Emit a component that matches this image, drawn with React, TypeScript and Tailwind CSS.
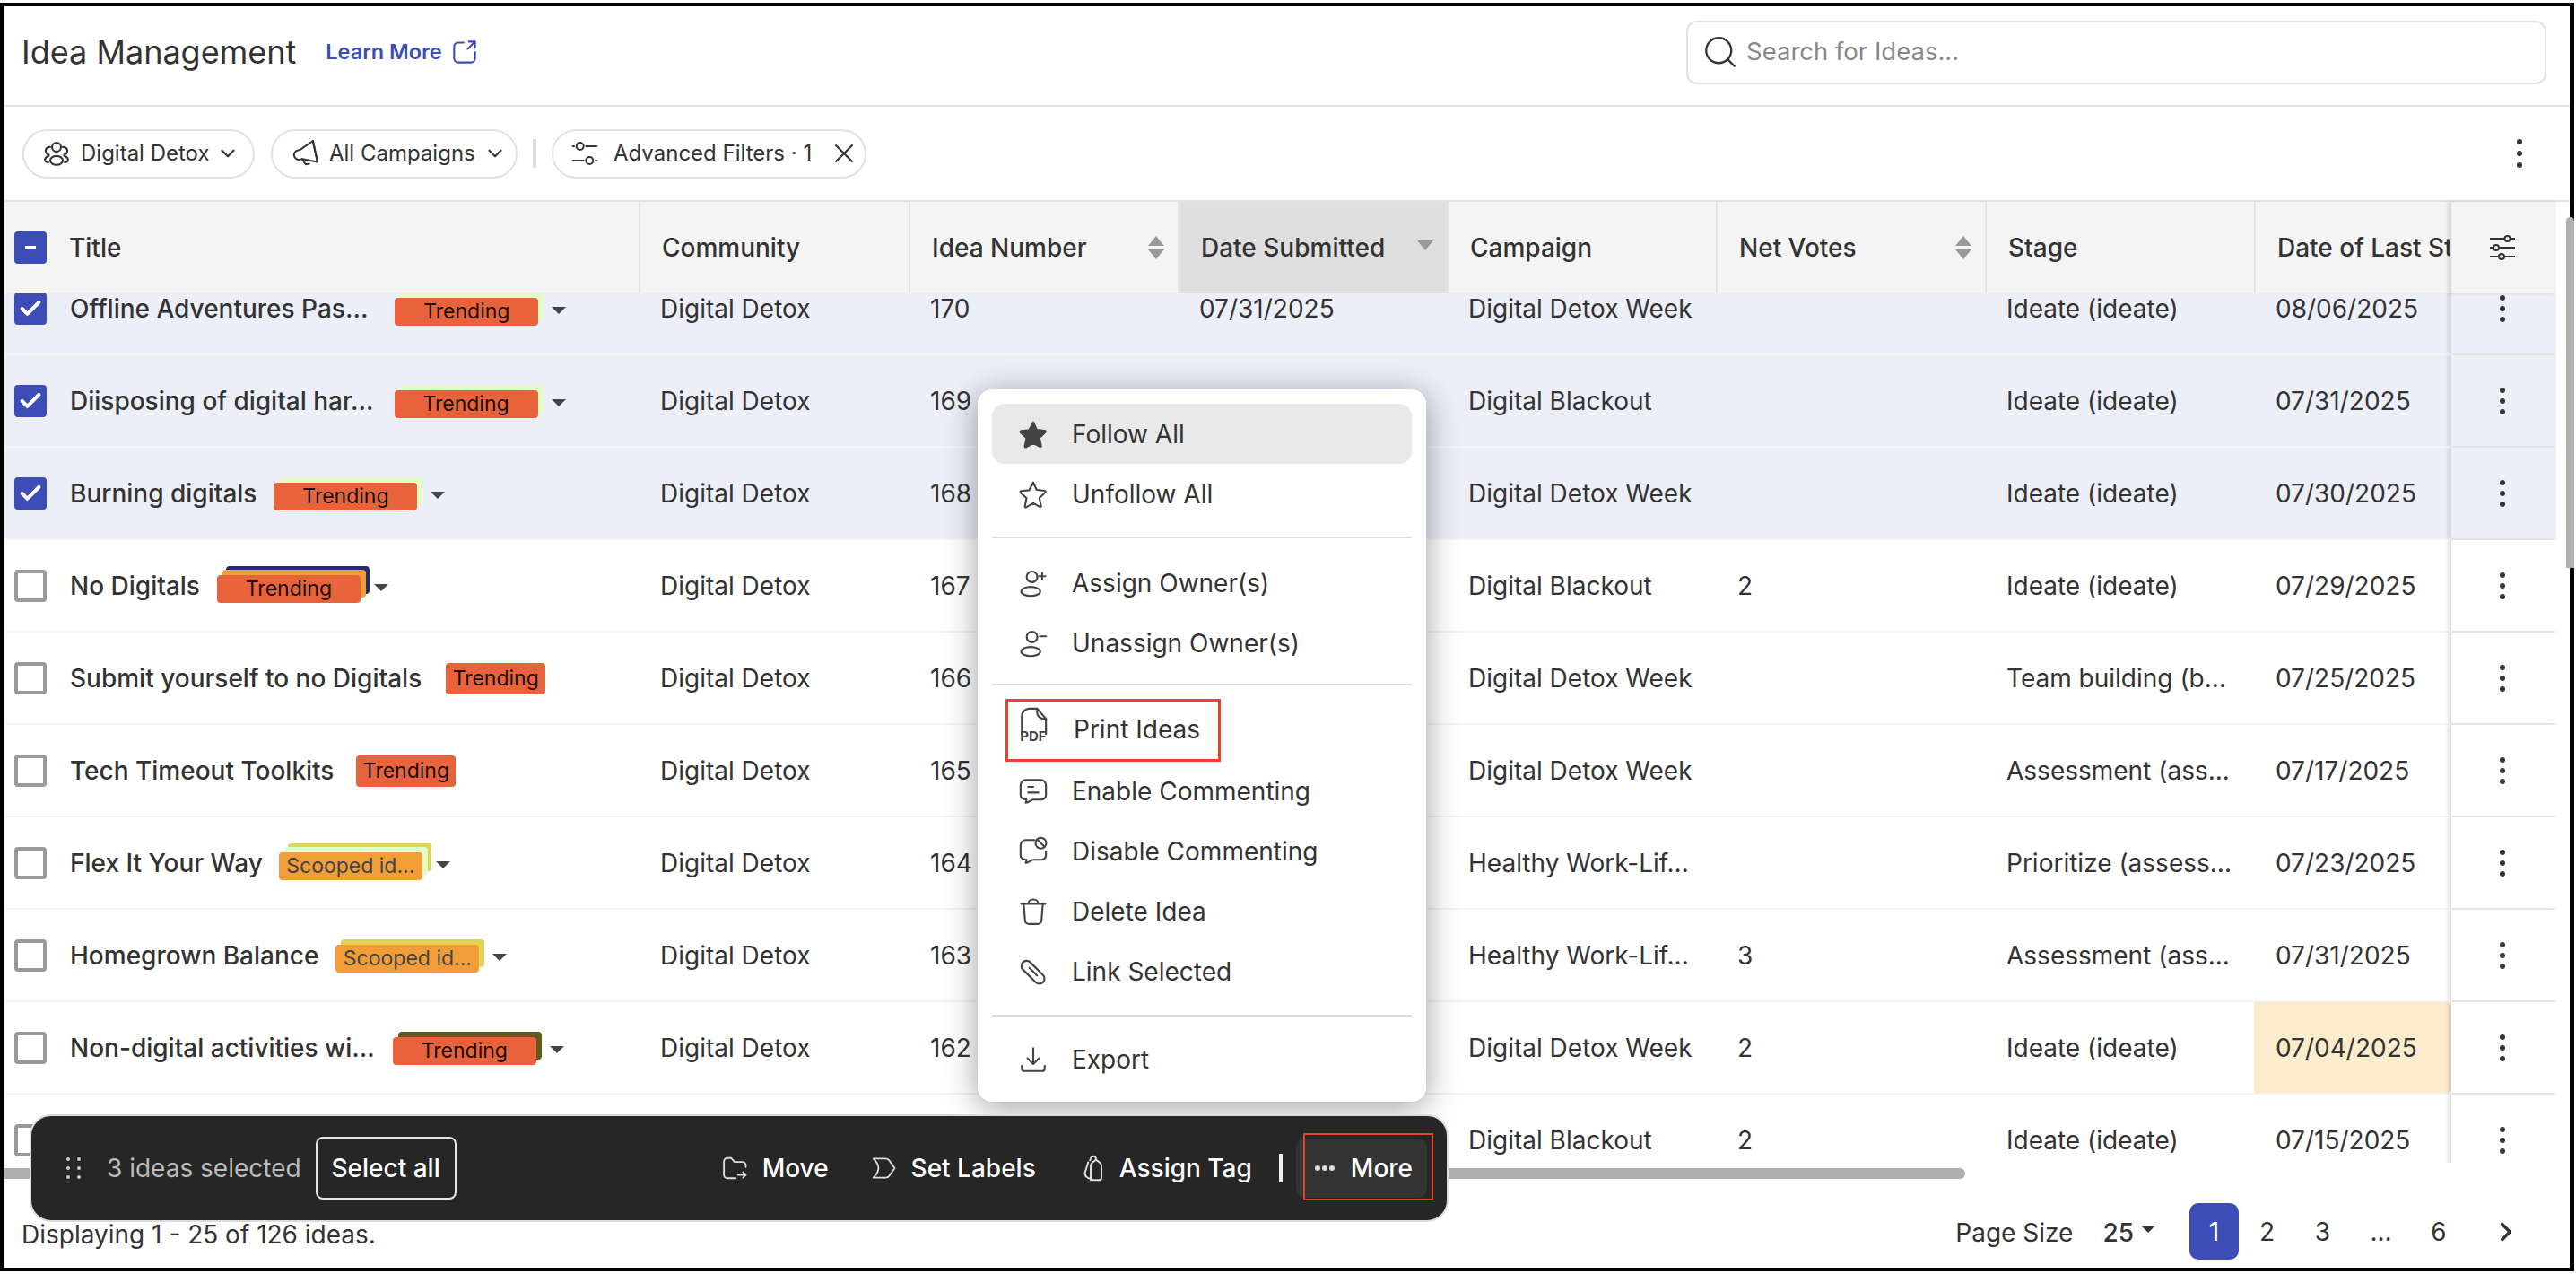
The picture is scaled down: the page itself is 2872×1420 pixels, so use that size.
import React from "react";
import { Check, ChevronDown, ChevronRight, Search, X } from "lucide-react";

type Row = {
  title?: string;
  tag?: string;
  back?: string[];
  gap?: string;
  num: string;
  date?: string;
  campaign: string;
  votes?: string;
  stage: string;
  last: string;
  selected?: boolean;
  overdue?: boolean;
};

const rows: Row[] = [
  { title: "Offline Adventures Pas...", tag: "Trending", back: ["#e2fdc7"], gap: "ml-[30px]", num: "170", date: "07/31/2025", campaign: "Digital Detox Week", stage: "Ideate (ideate)", last: "08/06/2025", selected: true },
  { title: "Diisposing of digital har...", tag: "Trending", back: ["#e2fdc7"], gap: "ml-[23px]", num: "169", campaign: "Digital Blackout", stage: "Ideate (ideate)", last: "07/31/2025", selected: true },
  { title: "Burning digitals", tag: "Trending", back: ["#e2fdc7"], gap: "ml-[19px]", num: "168", campaign: "Digital Detox Week", stage: "Ideate (ideate)", last: "07/30/2025", selected: true },
  { title: "No Digitals", tag: "Trending", back: ["#f19e38", "#232c73"], gap: "ml-[19px]", num: "167", campaign: "Digital Blackout", votes: "2", stage: "Ideate (ideate)", last: "07/29/2025" },
  { title: "Submit yourself to no Digitals", tag: "Trending", gap: "ml-[27px]", num: "166", campaign: "Digital Detox Week", stage: "Team building (b...", last: "07/25/2025" },
  { title: "Tech Timeout Toolkits", tag: "Trending", gap: "ml-[25px]", num: "165", campaign: "Digital Detox Week", stage: "Assessment (ass...", last: "07/17/2025" },
  { title: "Flex It Your Way", tag: "Scooped id...", back: ["#e2fdc7", "#dfd457"], gap: "ml-[18px]", num: "164", campaign: "Healthy Work-Lif...", stage: "Prioritize (assess...", last: "07/23/2025" },
  { title: "Homegrown Balance", tag: "Scooped id...", back: ["#dfd457"], gap: "ml-[19px]", num: "163", campaign: "Healthy Work-Lif...", votes: "3", stage: "Assessment (ass...", last: "07/31/2025" },
  { title: "Non-digital activities wi...", tag: "Trending", back: ["#625a1e"], gap: "ml-[20px]", num: "162", campaign: "Digital Detox Week", votes: "2", stage: "Ideate (ideate)", last: "07/04/2025", overdue: true },
  { num: "161", campaign: "Digital Blackout", votes: "2", stage: "Ideate (ideate)", last: "07/15/2025" },
];

function Kebab({ big }: { big?: boolean }) {
  return (
    <div className={big ? "flex flex-col gap-[7px]" : "flex flex-col gap-[6px]"}>
      <span className="w-[6px] h-[6px] rounded-full bg-[#333]" />
      <span className="w-[6px] h-[6px] rounded-full bg-[#333]" />
      <span className="w-[6px] h-[6px] rounded-full bg-[#333]" />
    </div>
  );
}

function SortArrows({ only }: { only?: boolean }) {
  return (
    <svg width="22" height="26" viewBox="0 0 22 26" fill="#999">
      {!only && <path d="M11 0l9 11H2z" />}
      <path d="M11 26l9-11H2z" transform={only ? "translate(0 -10)" : undefined} />
    </svg>
  );
}

function HeadCell({ label, w, sort, active }: { label: string; w: string; sort?: "both" | "down"; active?: boolean }) {
  return (
    <div className={`${w} h-full flex items-center shrink-0 pl-[24px] pr-[13px] border-l-2 border-[#e4e4e4] overflow-hidden ${active ? "bg-[#dfdfdf] border-[#dfdfdf]" : ""}`}>
      <span className="flex-1 whitespace-nowrap text-[28px] font-medium text-[#333]">{label}</span>
      {sort && <SortArrows only={sort === "down"} />}
    </div>
  );
}

function Cell({ w, children, bg }: { w: string; children?: React.ReactNode; bg?: string }) {
  return <div className={`${w} ${bg ?? ""} h-full shrink-0 pl-[24px] flex items-center whitespace-nowrap text-[28px] text-[#333]`}>{children}</div>;
}

function Box({ checked }: { checked?: boolean }) {
  if (checked) {
    return (
      <div className="w-[36px] h-[36px] shrink-0 rounded-[4px] bg-[#3d4db7] flex items-center justify-center text-white">
        <Check size={28} strokeWidth={3.5} />
      </div>
    );
  }
  return <div className="w-[36px] h-[36px] shrink-0 rounded-[4px] border-[4px] border-[#999] bg-white" />;
}

function TagStack({ row }: { row: Row }) {
  const scooped = row.tag?.startsWith("Scooped");
  const back = row.back ?? [];
  const front = scooped ? "bg-[#f19e38] text-[#444]" : "bg-[#e8633b] text-[#1a1010]";
  if (back.length === 0) {
    return (
      <span className={`${row.gap} ${front} h-[35px] w-[111px] rounded-[4px] flex items-center justify-center text-[23px] mt-[1px]`}>{row.tag}</span>
    );
  }
  return (
    <div className={`${row.gap} flex items-center mt-[7px]`}>
      <div className="relative w-[160px] h-[31px]">
        {back[1] && <span className="absolute left-[10px] -top-[10px] w-[160px] h-[31px] rounded-[4px]" style={{ background: back[1] }} />}
        {back[0] && <span className="absolute left-[6px] -top-[6px] w-[160px] h-[31px] rounded-[4px]" style={{ background: back[0] }} />}
        <span className={`${front} absolute inset-0 rounded-[4px] flex items-center justify-center text-[23px]`}>{row.tag}</span>
      </div>
      <span className="ml-[15px] -mt-[3px] w-0 h-0 border-x-[8px] border-x-transparent border-t-[8px] border-t-[#444]" />
    </div>
  );
}

function TableRow({ row }: { row: Row }) {
  return (
    <div className={`flex h-[103px] shrink-0 border-b-2 border-[#f4f4f4] ${row.selected ? "bg-[#eceef8]" : "bg-white"}`}>
      <div className="w-[707px] h-full shrink-0 flex items-center pl-[11px] overflow-hidden">
        <Box checked={row.selected} />
        {row.title && <span className="ml-[26px] whitespace-nowrap text-[28px] font-medium text-[#333]">{row.title}</span>}
        {row.tag && <TagStack row={row} />}
      </div>
      <Cell w="w-[301px]">Digital Detox</Cell>
      <Cell w="w-[300px]">{row.num}</Cell>
      <Cell w="w-[300px]">{row.date}</Cell>
      <Cell w="w-[300px]">{row.campaign}</Cell>
      <Cell w="w-[300px]">{row.votes}</Cell>
      <Cell w="w-[300px]">{row.stage}</Cell>
      <Cell w="w-[218px]" bg={row.overdue ? "bg-[#fceccb]" : undefined}>{row.last}</Cell>
      <div className="flex-1 h-full flex items-center justify-center pr-[4px] border-l-2 border-[#d8d8d8] shadow-[-2px_0_3px_rgba(0,0,0,0.12)]">
        <Kebab />
      </div>
    </div>
  );
}

const stroke = { fill: "none", stroke: "currentColor", strokeWidth: 1.5, strokeLinecap: "round", strokeLinejoin: "round" } as const;

function Ico({ children, size = 34 }: { children: React.ReactNode; size?: number }) {
  return (
    <svg width={size} height={size} viewBox="0 0 24 24" {...stroke}>
      {children}
    </svg>
  );
}

const starPath = "M12 2.6l2.7 5.9 6.4.7c.6.1.8.8.4 1.2l-4.7 4.4 1.3 6.3c.1.6-.5 1-1 .7L12 19l-5.6 3.1c-.5.3-1.1-.1-1-.7l1.3-6.4-4.7-4.4c-.4-.4-.2-1.1.4-1.2l6.4-.7z";

function MenuItem({ icon, label, active }: { icon: React.ReactNode; label: string; active?: boolean }) {
  return (
    <div className={`h-[67px] flex items-center pl-[29px] rounded-[14px] text-[28px] text-[#333] ${active ? "bg-[#e9e9e9]" : ""}`}>
      <span className="w-[34px] flex justify-center text-[#444]">{icon}</span>
      <span className="ml-[26px] whitespace-nowrap">{label}</span>
    </div>
  );
}

function ActionsMenu() {
  return (
    <div className="absolute left-[1090px] top-[434px] w-[500px] h-[794px] bg-white rounded-[16px] shadow-[0_6px_36px_rgba(0,0,0,0.38)] px-[16px] pt-[16px]">
      <MenuItem active label="Follow All" icon={<Ico><path d={starPath} fill="currentColor" /></Ico>} />
      <MenuItem label="Unfollow All" icon={<Ico><path d={starPath} /></Ico>} />
      <div className="h-[2px] bg-[#dcdcdc] mt-[14px] mb-[16px]" />
      <MenuItem label="Assign Owner(s)" icon={<Ico><circle cx="11" cy="7" r="4.2" /><ellipse cx="10" cy="18.5" rx="7.5" ry="3.6" /><path d="M19 4v5M16.5 6.5h5" /></Ico>} />
      <MenuItem label="Unassign Owner(s)" icon={<Ico><circle cx="11" cy="7" r="4.2" /><ellipse cx="10" cy="18.5" rx="7.5" ry="3.6" /><path d="M17 6.5h5" /></Ico>} />
      <div className="h-[2px] bg-[#dcdcdc] mt-[12px] mb-[14px]" />
      <div className="relative h-[70px] flex items-center pl-[29px] text-[28px] text-[#333]">
        <span className="w-[34px] h-[52px] flex flex-col items-center text-[#444]">
          <svg width="34" height="34" viewBox="0 0 24 24" {...stroke} className="shrink-0">
            <path d="M3 22V8a6 6 0 0 1 6-6h6l7 8v12" />
            <path d="M15 2v3a5 5 0 0 0 5 5h2" />
          </svg>
          <span className="-mt-[9px] text-[15px] leading-[18px] font-bold">PDF</span>
        </span>
        <span className="ml-[28px] whitespace-nowrap">Print Ideas</span>
        <span className="absolute left-[15px] top-[1px] w-[240px] h-[70px] border-[3px] border-[#e8442a]" />
      </div>
      <MenuItem label="Enable Commenting" icon={<Ico><path d="M6 3h12a4 4 0 0 1 4 4v8a3.5 3.5 0 0 1-3.5 3.5H12c-2 0-3 2.5-6 2.5 0 0 .8-1.4.6-2.6C3.5 18.5 2 17 2 15V7a4 4 0 0 1 4-4z" /><path d="M8 8.500h4M8 13h8" /></Ico>} />
      <MenuItem label="Disable Commenting" icon={<Ico><path d="M13 3H6a4 4 0 0 0-4 4v8c0 2 1.500 3.500 4.600 3.400.2 1.200-.6 2.600-.6 2.600 3 0 4-2.500 6-2.500h6.500A3.500 3.500 0 0 0 22 15v-3" /><circle cx="18" cy="5.500" r="4.200" /><path d="M15.200 2.700l5.600 5.600" /></Ico>} />
      <MenuItem label="Delete Idea" icon={<Ico><path d="M2.500 6h19M8 6c0-2 1.500-3.500 4-3.500S16 4 16 6" /><path d="M4.500 6l1 13a3 3 0 0 0 3 2.800h7a3 3 0 0 0 3-2.800l1-13" /></Ico>} />
      <MenuItem label="Link Selected" icon={<Ico><path d="M9.500 4.500l10 10a4 4 0 0 1-5.500 6l-10-10a4 4 0 0 1 5.500-6z" /><path d="M9 9l6 6" /></Ico>} />
      <div className="h-[2px] bg-[#dcdcdc] mt-[15px] mb-[14px]" />
      <MenuItem label="Export" icon={<Ico><path d="M12 3v12M7.500 11l4.500 4.500 4.500-4.500" /><path d="M3 17v2a2 2 0 0 0 2 2h14a2 2 0 0 0 2-2v-2" /></Ico>} />
    </div>
  );
}

function BulkBar() {
  return (
    <div className="absolute left-[33px] top-[1242px] w-[1582px] h-[120px] rounded-[24px] bg-[#262626] border-2 border-[#dcdcdc] flex items-center text-[28px]">
      <div className="ml-[39px] grid grid-cols-2 gap-x-[8px] gap-y-[6px]">
        {[0, 1, 2, 3, 4, 5].map((i) => (
          <span key={i} className="w-[4px] h-[4px] rounded-full bg-[#ccc]" />
        ))}
      </div>
      <span className="ml-[29px] text-[#bbb] whitespace-nowrap">3 ideas selected</span>
      <span className="ml-[16px] w-[157px] h-[70px] shrink-0 rounded-[8px] border-2 border-[#e5e5e5] text-white font-medium flex items-center justify-center whitespace-nowrap">Select all</span>
      <span className="ml-[295px] text-[#ddd]">
        <Ico size={30}><path d="M2.500 18V6a3 3 0 0 1 3-3h3.500l3 3.500h7a3 3 0 0 1 3 3V11" /><path d="M2.500 18a3 3 0 0 0 3 3H13M15 18h7M19.500 15.500L22 18l-2.500 2.500" /></Ico>
      </span>
      <span className="ml-[16px] text-white font-medium">Move</span>
      <span className="ml-[46px] text-[#ddd]">
        <Ico size={30}><path d="M3 3.500h11c1.500 0 2.500.6 3.200 1.700L22 12l-4.800 6.800c-.7 1.100-1.700 1.700-3.200 1.700H3c2-2 4.500-5 4.500-8.500S5 5.500 3 3.500z" /></Ico>
      </span>
      <span className="ml-[16px] text-white font-medium whitespace-nowrap">Set Labels</span>
      <span className="ml-[49px] text-[#ddd]">
        <Ico size={32}><path d="M9 22h7a2 2 0 0 0 2-2V10c0-1.200-.5-2-1.500-2.700L13.500 5l-3 2.300C9.500 8 9 8.800 9 10v10c0 1 .2 1.600 0 2z" /><path d="M9 21c-1-.3-3-1-4-2.200s-1-2.500-.5-4L7 7" /><path d="M13.500 5c0-1.800-.5-3-2-3s-2.500 1.500-3 3.500" /></Ico>
      </span>
      <span className="ml-[12px] text-white font-medium whitespace-nowrap">Assign Tag</span>
      <span className="ml-[30px] w-[4px] h-[32px] shrink-0 bg-[#eee]" />
      <div className="relative ml-[15px] w-[146px] h-[66px] shrink-0 rounded-[10px] bg-[#333] flex items-center pl-[21px]">
        <span className="flex gap-[2px]">
          <span className="w-[6px] h-[6px] rounded-full bg-[#ddd]" />
          <span className="w-[6px] h-[6px] rounded-full bg-[#ddd]" />
          <span className="w-[6px] h-[6px] rounded-full bg-[#ddd]" />
        </span>
        <span className="ml-[18px] text-white font-medium">More</span>
        <span className="absolute left-[8px] -top-[6px] w-[145px] h-[75px] border-2 border-[#e8442a]" />
      </div>
    </div>
  );
}

function Pill({ children, className }: { children: React.ReactNode; className: string }) {
  return <div className={`h-[55px] rounded-full border-2 border-[#e2e2e2] flex items-center text-[24px] text-[#333] whitespace-nowrap ${className}`}>{children}</div>;
}

export default function App() {
  return (
    <div className="relative w-[2872px] h-[1420px] bg-white pt-[3px] pb-[3px] pr-[2px] overflow-hidden" style={{ fontFamily: "Inter, 'Noto Sans', sans-serif" }}>
      <div className="h-full border-y-4 border-x-[5px] border-black flex flex-col">
        {/* title bar */}
        <div className="h-[112px] shrink-0 flex items-center border-b-2 border-[#e2e2e2] pl-[19px] pr-[26px] pb-[8px]">
          <h1 className="text-[36px] text-[#333] whitespace-nowrap">Idea Management</h1>
          <a className="ml-[33px] text-[23.5px] font-semibold text-[#3d4db7] whitespace-nowrap">Learn More</a>
          <svg className="ml-[11px] text-[#3d4db7]" width="28" height="28" viewBox="0 0 24 24" {...stroke} strokeWidth={1.8}>
            <path d="M11 3H6a4 4 0 0 0-4 4v11a4 4 0 0 0 4 4h12a4 4 0 0 0 4-4v-6" />
            <path d="M16 2h6v6M22 2l-7 7" />
          </svg>
          <div className="ml-auto w-[959px] h-[71px] rounded-[12px] border-2 border-[#e2e2e2] flex items-center pl-[15px]">
            <Search size={42} strokeWidth={1.3} className="text-[#333]" />
            <span className="ml-[8px] text-[27.5px] text-[#888]">Search for Ideas...</span>
          </div>
        </div>

        {/* filters */}
        <div className="h-[106px] shrink-0 flex items-center border-b-2 border-[#e2e2e2] pl-[20px] pr-[53px]">
          <Pill className="w-[259px] pl-[19px]">
            <Ico size={34}><circle cx="12" cy="7" r="3.500" /><path d="M6 13a3 3 0 0 1 1-6M18 13a3 3 0 0 0-1-6" /><ellipse cx="12" cy="17.500" rx="5" ry="3.500" /><path d="M6 14c-2 .5-3.500 1.800-3 3.500.2 1 1 1.500 2.500 1.500M18 14c2 .5 3.500 1.800 3 3.500-.2 1-1 1.500-2.500 1.500" /></Ico>
            <span className="ml-[10px]">Digital Detox</span>
            <ChevronDown size={26} className="ml-[7px]" />
          </Pill>
          <Pill className="ml-[18px] w-[275px] pl-[21px]">
            <svg width="32" height="32" viewBox="0 0 24 24" {...stroke} className="-rotate-[12deg]"><path d="M20 3L8 8H6a4 4 0 0 0 0 8h2l12 5z" /><path d="M8 16l2 5h3" /><path d="M20 3v18" /></svg>
            <span className="ml-[10px]">All Campaigns</span>
            <ChevronDown size={26} className="ml-[9px]" />
          </Pill>
          <span className="ml-[17px] w-[4px] h-[32px] bg-[#dcdcdc]" />
          <Pill className="ml-[17px] w-[351px] pl-[19px]">
            <Ico size={32}><circle cx="8" cy="6" r="3" /><path d="M13 6h9" /><circle cx="16" cy="18" r="3" /><path d="M2 18h9M21 18h1M2 6h1" /></Ico>
            <span className="ml-[16px]">Advanced Filters · 1</span>
            <X size={36} strokeWidth={1.4} className="ml-[18px]" />
          </Pill>
          <div className="ml-auto"><Kebab big /></div>
        </div>

        {/* table */}
        <div className="h-[1071px] shrink-0 flex">
          <div className="w-[2845px] shrink-0 flex flex-col">
            <div className="h-[102px] shrink-0 flex items-center bg-[#f4f4f4] relative z-10">
              <div className="w-[707px] h-full shrink-0 flex items-center pl-[11px]">
                <div className="w-[36px] h-[36px] rounded-[4px] bg-[#3d4db7] flex items-center justify-center">
                  <span className="w-[12px] h-[4px] bg-white" />
                </div>
                <span className="ml-[25px] text-[28px] font-medium text-[#333]">Title</span>
              </div>
              <HeadCell label="Community" w="w-[301px]" />
              <HeadCell label="Idea Number" w="w-[300px]" sort="both" />
              <HeadCell label="Date Submitted" w="w-[300px]" sort="down" active />
              <HeadCell label="Campaign" w="w-[300px]" />
              <HeadCell label="Net Votes" w="w-[300px]" sort="both" />
              <HeadCell label="Stage" w="w-[300px]" />
              <HeadCell label="Date of Last Stage Change" w="w-[218px]" />
              <div className="flex-1 h-full flex items-center justify-center pr-[4px] border-l-2 border-[#d8d8d8] shadow-[-2px_0_3px_rgba(0,0,0,0.12)]">
                <svg width="30" height="28" viewBox="0 0 30 28" fill="none" stroke="#333" strokeWidth="2">
                  <path d="M1 4h16M24 4h5M1 14h3M12 14h17M1 24h9M18 24h11" />
                  <circle cx="20.500" cy="4" r="3" />
                  <circle cx="8" cy="14" r="3" />
                  <circle cx="14" cy="24" r="3" />
                </svg>
              </div>
            </div>
            <div className="h-[969px] overflow-hidden">
              <div className="-mt-[34px] flex flex-col">
                {rows.map((r) => (
                  <TableRow key={r.num} row={r} />
                ))}
              </div>
            </div>
          </div>
          <div className="flex-1 pl-[11px] pt-[17px]">
            <div className="w-[9px] h-[391px] rounded-t-[6px] bg-[#b0b0b0]" />
          </div>
        </div>

        {/* horizontal scrollbar */}
        <div className="h-[24px] shrink-0 pt-[6px]">
          <div className="w-[2186px] h-[12px] rounded-r-full bg-[#b0b0b0]" />
        </div>

        {/* footer */}
        <div className="flex-1 flex items-center pt-[12px] pl-[19px] pr-[54px] text-[28px] text-[#333]">
          <span className="mt-[7px]">Displaying 1 - 25 of 126 ideas.</span>
          <span className="ml-auto mt-[3px]">Page Size</span>
          <span className="ml-[33px] mt-[3px] font-medium">25</span>
          <span className="ml-[8px] -mt-[6px] w-0 h-0 border-x-[8px] border-x-transparent border-t-[8px] border-t-[#333]" />
          <span className="ml-[38px] w-[55px] h-[63px] rounded-[10px] bg-[#3d4db7] text-white flex items-center justify-center">1</span>
          <span className="w-[63px] text-center">2</span>
          <span className="w-[61px] text-center">3</span>
          <span className="w-[69px] text-center">...</span>
          <span className="w-[60px] text-center">6</span>
          <ChevronRight size={34} strokeWidth={2.5} className="ml-[28px]" />
        </div>
      </div>

      <ActionsMenu />
      <BulkBar />
    </div>
  );
}
